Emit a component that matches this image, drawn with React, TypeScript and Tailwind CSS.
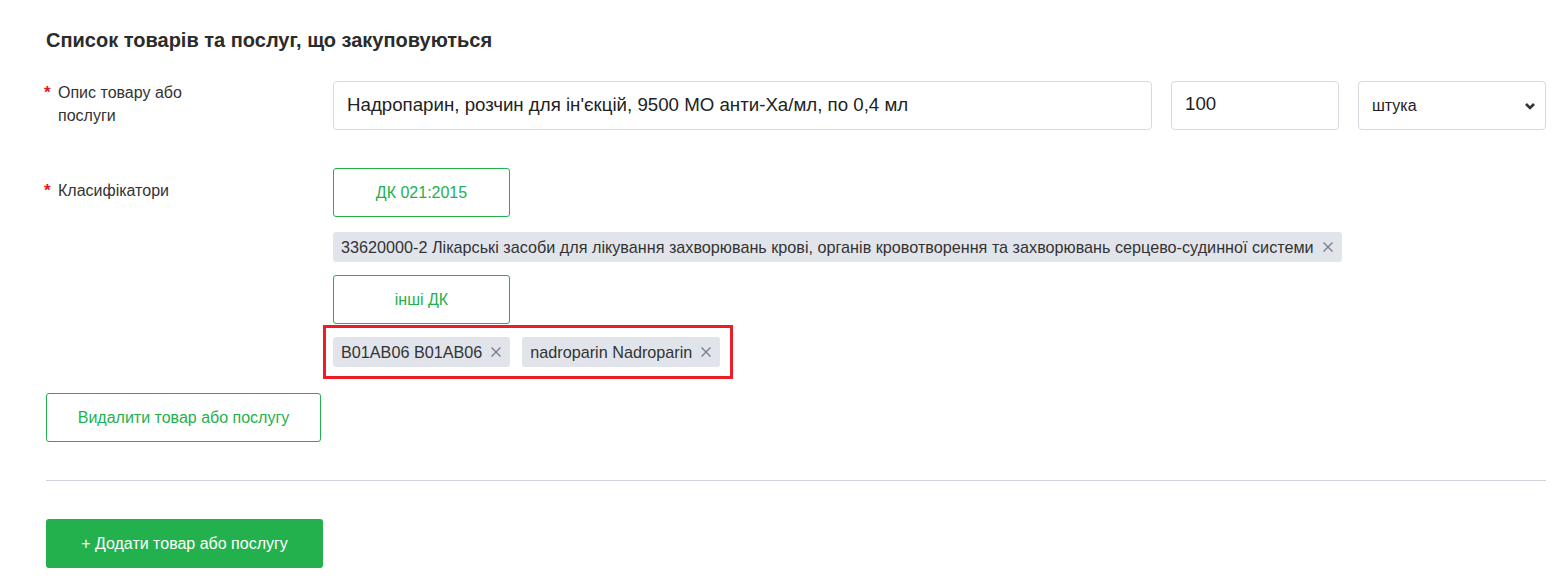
import React from 'react';

const GREEN = '#23b14d';

function CloseIcon() {
  return (
    <svg viewBox="0 0 12 12" className="w-[12px] h-[12px] text-[#7a7f87]" fill="none" stroke="currentColor" strokeWidth="1.4">
      <path d="M1.5 1.5l9 9M10.5 1.5l-9 9" />
    </svg>
  );
}

function Chip({ label }: { label: string }) {
  return (
    <span className="inline-flex items-center gap-[8px] h-[30px] pl-[8px] pr-[8px] rounded-[3px] bg-[#e1e5eb] text-[16.2px] text-[#333]">
      {label}
      <CloseIcon />
    </span>
  );
}

function OutlineButton({ children, className = '' }: { children: React.ReactNode; className?: string }) {
  return (
    <button
      className={`h-[49px] rounded-[3px] border border-[#23b14d] bg-white text-[16px] text-[#23b14d] ${className}`}
    >
      {children}
    </button>
  );
}

function Label({ children, className = '' }: { children: React.ReactNode; className?: string }) {
  return (
    <div className={`w-[287px] shrink-0 flex text-[16px] leading-[23px] text-[#333] ${className}`}>
      <span className="w-[14px] shrink-0 text-[#e01b1b] text-[17px] font-bold">*</span>
      <span className="w-[140px]">{children}</span>
    </div>
  );
}

export default function App() {
  return (
    <div className="min-h-screen bg-white pl-[46px] pr-[15px] pt-[28px] pb-[18px]" style={{ fontFamily: '"Liberation Sans", Arial, sans-serif' }}>
      <h2 className="text-[20px] font-bold text-[#2b2b2b] leading-[24px]">
        Список товарів та послуг, що закуповуються
      </h2>

      {/* Опис */}
      <div className="flex mt-[29px] -ml-[2px]">
        <Label>Опис товару або послуги</Label>
        <div className="flex flex-1 gap-[19px] ml-[2px]">
          <div className="flex-1 h-[49px] rounded-[4px] border border-[#d6dae1] px-[13px] flex items-center text-[18.7px] text-[#222]">
            Надропарин, розчин для ін'єкцій, 9500 МО анти-Ха/мл, по 0,4 мл
          </div>
          <div className="w-[168px] h-[49px] rounded-[4px] border border-[#d6dae1] px-[13px] pb-[2px] flex items-center text-[18.7px] text-[#222]">
            100
          </div>
          <div className="w-[188px] h-[49px] rounded-[4px] border border-[#d6dae1] pl-[13px] pr-[9px] flex items-center justify-between text-[16px] text-[#222]">
            <span>штука</span>
            <svg viewBox="0 0 12 12" className="w-[12px] h-[12px]" fill="none" stroke="#333" strokeWidth="2.6">
              <path d="M2 4l4 4 4-4" />
            </svg>
          </div>
        </div>
      </div>

      {/* Класифікатори */}
      <div className="flex mt-[38px] -ml-[2px]">
        <Label className="pt-[11px]">Класифікатори</Label>
        <div className="flex flex-col items-start ml-[2px]">
          <OutlineButton className="w-[177px]">ДК 021:2015</OutlineButton>
          <div className="mt-[15px]">
            <Chip label="33620000-2 Лікарські засоби для лікування захворювань крові, органів кровотворення та захворювань серцево-судинної системи" />
          </div>
          <OutlineButton className="w-[177px] mt-[13px]">інші ДК</OutlineButton>
          <div className="mt-[1px] -ml-[10px] w-[410px] border-[3px] border-[#ec1c24] pl-[7px] py-[9px] flex gap-[12px]">
            <Chip label="B01AB06 B01AB06" />
            <Chip label="nadroparin Nadroparin" />
          </div>
        </div>
      </div>

      <OutlineButton className="w-[275px] mt-[14px]">Видалити товар або послугу</OutlineButton>

      <div className="h-px bg-[#cfd4dc] mt-[38px]" />

      <button
        className="mt-[38px] w-[277px] h-[49px] rounded-[3px] text-white text-[16px]"
        style={{ backgroundColor: GREEN }}
      >
        + Додати товар або послугу
      </button>
    </div>
  );
}
